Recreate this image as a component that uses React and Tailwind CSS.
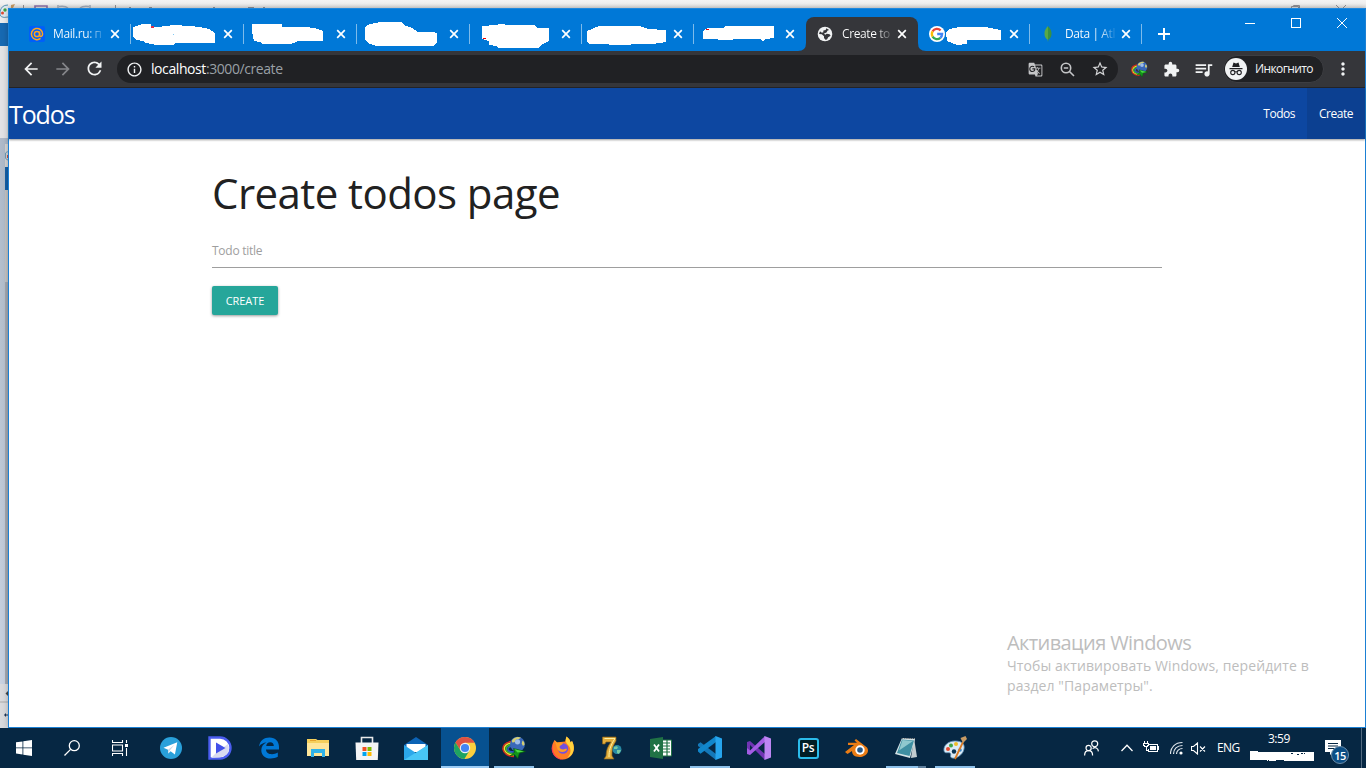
import React from "react";
import {
  MdArrowBack,
  MdArrowForward,
  MdRefresh,
  MdInfoOutline,
  MdGTranslate,
  MdStarBorder,
  MdExtension,
  MdQueueMusic,
  MdMoreVert,
} from "react-icons/md";

const UI = "font-['Open_Sans','Noto_Sans',sans-serif]";

function Cross({ className = "" }) {
  return (
    <svg className={className} width="10" height="10" viewBox="0 0 10 10">
      <path d="M1.2 1.2 8.8 8.8M8.8 1.2 1.2 8.8" stroke="#fff" strokeWidth="1.7" fill="none" />
    </svg>
  );
}

const tabs = [
  { x: 18, w: "w-[113px]", kind: "mail", title: "Mail.ru: п" },
  { x: 131, w: "w-[113px]", blob: "M133 27 137 26 142 24H151L152 27 157 27 166 26 173 25 190 26 200 27 209 29 215 33V43H175L174 45H154L153 44 145 43 143 41 137 40 133 37Z" },
  { x: 244, w: "w-[113px]", blob: "M252 24H282V27L305 27 315 28 323 31V41H297L296 42 290 44H262L260 42 254 41 252 32Z" },
  { x: 357, w: "w-[113px]", blob: "M365 27 370 24 380 22H401L404 25 412 28 418 32 433 32 437 33V43L433 46H377L370 44 365 40Z" },
  { x: 470, w: "w-[112px]", blob: "M482 26 495 25 500 24 510 25H534L537 28H549V41L543 44 538 48H498L496 46 489 45V41L482 39Z" },
  { x: 582, w: "w-[112px]", blob: "M587 31 592 29 599 26H640L648 29 666 30V42L652 44 610 45 608 44H590L587 42Z" },
  { x: 694, w: "w-[112px]", blob: "M703 31 708 28 723 28 726 26H774V38L765 39 763 41 760 39H734L732 40 703 39Z" },
  { x: 806, w: "w-[112px]", kind: "active", title: "Create to" },
  { x: 918, w: "w-[112px]", kind: "google", blob: "M946 32 949 29 959 27 985 27 990 28 1001 30V40H967V44L957 45 952 43 947 41Z" },
  { x: 1030, w: "w-[112px]", kind: "mongo", title: "Data | Atl" },
];

function TabIcon({ kind }) {
  if (kind === "mail")
    return (
      <svg className="-ml-px" width="16" height="16" viewBox="0 0 16 16">
        <rect width="16" height="16" rx="2" fill="#005ff9" />
        <g fill="none" stroke="#ffa61e" strokeWidth="1.5">
          <circle cx="8" cy="8" r="2.6" />
          <path d="M10.6 5.6V9c0 2.2 3 1.900 3-1A5.600 5.600 0 1 0 11.500 12.400" />
        </g>
      </svg>
    );
  if (kind === "active")
    return (
      <svg className="-ml-px" width="16" height="16" viewBox="0 0 16 16">
        <circle cx="8" cy="8" r="7.300" fill="#f1f3f4" />
        <path d="M9.300 2.200 8.700 4 6.400 4.600 6.200 6.400 4.400 6.600 3 5.300 2 8l2.800.2L7 10.200V12l1.400 1.800L10 13.500 11.200 11.300 13.600 9.800 12.600 8.200 9.800 7.800 8.200 8.800 7 7.600 9.500 6.600 10.600 4.600 12.200 3.900Z" fill="#35363a" />
      </svg>
    );
  if (kind === "google")
    return (
      <svg width="16" height="16" viewBox="0 0 16 16">
        <circle cx="8" cy="8" r="8" fill="#fff" />
        <g fill="none" strokeWidth="2.300">
          <path d="M11.600 4.400A5.100 5.100 0 0 0 3.600 5.400" stroke="#ea4335" />
          <path d="M3.600 5.400A5.100 5.100 0 0 0 3.600 10.600" stroke="#fbbc05" />
          <path d="M3.600 10.600A5.100 5.100 0 0 0 11.400 11.800" stroke="#34a853" />
          <path d="M11.400 11.800A5.100 5.100 0 0 0 13.100 8H8.200" stroke="#4285f4" />
        </g>
      </svg>
    );
  if (kind === "mongo")
    return (
      <svg className="-ml-[2px]" width="16" height="16" viewBox="0 0 16 16">
        <path d="M8 0C5 3 4.400 5.500 4.500 8c0 3 1.500 4.500 3 5.600L8 16Z" fill="#59a845" />
        <path d="M8 0c3 3 3.600 5.500 3.500 8 0 3-1.500 4.500-3 5.600L8 16Z" fill="#3a9140" />
      </svg>
    );
  return null;
}

function Tab({ tab, separator }) {
  const active = tab.kind === "active";
  return (
    <div
      className={`relative flex h-[34px] shrink-0 items-center ${tab.w} ${active ? "rounded-t-[8px] bg-[#35363a]" : ""} ${tab.kind === "google" ? "pl-[11px]" : "pl-3"}`}
    >
      <TabIcon kind={tab.kind} />
      {tab.title && (
        <span
          className={`${tab.kind === "mail" ? "ml-2" : "ml-[9px]"} h-[18px] w-[54px] text-[12px] leading-[18px] font-medium tracking-[-0.4px] whitespace-nowrap text-transparent bg-clip-text bg-gradient-to-r from-white from-62% to-white/5 to-95%`}
        >
          {tab.title}
        </span>
      )}
      {tab.blob && (
        <svg className="absolute top-[-9px] left-0" width="112" height="43" viewBox={`${tab.x} 8 112 43`}>
          <path d={tab.blob} fill="#fff" shapeRendering="crispEdges" />
          {tab.x === 131 && <path d="M151 26h3v2h-3z" fill="#d9304c" />}
          {tab.x === 131 && <path d="M173 34h1v1h-1z" fill="#7fc8f5" />}
          {tab.x === 470 && <path d="M483 38h3v1h-3z" fill="#e00" />}
          {tab.x === 694 && <path d="M706 29h3v1h-3z" fill="#e00" />}
        </svg>
      )}
      <Cross className="absolute top-3 right-[11px]" />
      {active && (
        <>
          <svg className="absolute bottom-0 -left-2" width="8" height="8"><path d="M8 0V8H0Q8 8 8 0" fill="#35363a" /></svg>
          <svg className="absolute -right-2 bottom-0" width="8" height="8"><path d="M0 0V8H8Q0 8 0 0" fill="#35363a" /></svg>
        </>
      )}
      {separator && <i className="absolute top-[7px] right-0 h-5 w-px bg-[#7dbbeb]" />}
    </div>
  );
}

function IdmIcon({ size = 24 }) {
  return (
    <svg width={size} height={size} viewBox="0 0 24 24">
      <g fill="none" strokeWidth="1.500">
        <path d="M9 5.500C3 6.500 .5 10 1 13.500S6 20.500 12 20.500" stroke="#d92b1c" />
        <path d="M9 7C4.500 8 2 10.500 2.500 13.500S7 19 12 19" stroke="#f3e02b" />
        <path d="M9 8.500C6 9.500 3.800 11.500 4.200 13.500S8 17.500 12 17.500" stroke="#35b936" />
        <path d="M10 10C7.500 10.700 5.500 12 5.900 13.500S9 16 12 16" stroke="#2d59c8" />
      </g>
      <circle cx="15.500" cy="8.300" r="7.500" fill="#3a68b8" />
      <path d="M9.800 4.700C11.800 1.300 16 .3 19 1.800L16.500 3.200l-2.500.5-1.500 2.500-2.200.3ZM20.500 4.500l1.600 1.500.5 2.500-1.600 1.500-1.300-2.500Z" fill="#d5cf72" />
      <circle cx="15.500" cy="5.800" r="2.600" fill="#9dbdea" />
      <path d="m11.500 12.500 12 3-6 1.700-1.800 5.300-3-3.800-4.700 1.300 4.500-3.800Z" fill="#12951a" stroke="#07570d" strokeWidth=".6" />
      <path d="m12.500 13.200 9.500 2.300-6.500 1Z" fill="#4ddb46" />
    </svg>
  );
}

function Toolbar() {
  return (
    <div className="flex h-[37px] shrink-0 items-center border-b border-[#242528] bg-[#35363a] pl-3 text-[#f1f3f4]">
      <MdArrowBack size={20} className="-mt-px" />
      <MdArrowForward size={20} className="-mt-px ml-3 text-[#85868a]" />
      <MdRefresh size={21} className="-mt-px ml-[11px]" />
      <div className="ml-3 flex h-7 w-[1001px] items-center rounded-full bg-[#202124] pl-[9px]">
        <MdInfoOutline size={17} />
        <span className="ml-2 grow text-[14px] leading-5 tracking-[-0.42px] text-white">
          localhost<span className="text-[#9aa0a6]">:3000/create</span>
        </span>
        <MdGTranslate size={15} className="mr-[17px] text-[#c4c5c7]" />
        <svg className="mr-[16px]" width="15" height="15" viewBox="0 0 15 15" fill="none" stroke="#c4c5c7" strokeWidth="1.600">
          <circle cx="6" cy="6" r="4.700" /><path d="m9.500 9.500 4.500 4.500M3.800 6h4.400" />
        </svg>
        <MdStarBorder size={18} className="mr-[9px] text-[#d4d5d7]" />
      </div>
      <div className="ml-[13px]"><IdmIcon size={17} /></div>
      <MdExtension size={17} className="ml-[15px]" />
      <MdQueueMusic size={21} className="ml-[13px]" />
      <div className="ml-[9px] flex h-7 w-[101px] items-center rounded-full border border-[#3d3e42] bg-[#202124] pl-px">
        <svg className="shrink-0" width="22" height="22" viewBox="0 0 22 22">
          <circle cx="11" cy="11" r="11" fill="#f1f3f4" />
          <path d="M7.200 9 8.500 4.600l2.500.8 2.500-.8L14.800 9ZM4.500 10h13v1.300h-13z" fill="#202124" />
          <g fill="none" stroke="#202124" strokeWidth="1.100"><circle cx="7.800" cy="14.500" r="2.100" /><circle cx="14.200" cy="14.500" r="2.100" /><path d="M10 14q1-.6 2 0" /></g>
        </svg>
        <span className="ml-2 text-[12px] leading-5 font-medium tracking-[-0.6px] whitespace-nowrap">Инкогнито</span>
      </div>
      <MdMoreVert size={20} className="ml-[9px]" />
    </div>
  );
}

function WindowControls() {
  return (
    <div className="ml-auto flex h-[30px] text-white">
      <svg width="138" height="30" viewBox="0 0 138 30" fill="none" stroke="#fff" shapeRendering="crispEdges">
        <path d="M18 14.500h10" />
        <rect x="64.500" y="9.500" width="9" height="9" />
        <path d="m110 9 10 10m0-10-10 10" shapeRendering="auto" />
      </svg>
    </div>
  );
}

function Page() {
  return (
    <div className="flex grow flex-col bg-white">
      <nav className="relative flex h-[51px] shrink-0 items-center justify-between bg-[#0d47a1] text-white shadow-[0_1px_2px_rgba(0,0,0,0.4)]">
        <a className="mt-px text-[25px] leading-none tracking-[-1.1px]">Todos</a>
        <ul className="flex h-full text-[12px] font-medium tracking-[-0.48px]">
          <li className="flex items-center px-3">Todos</li>
          <li className="flex w-[58px] items-center justify-center bg-[#0c4091]">Create</li>
        </ul>
      </nav>
      <main className="ml-[203px] w-[950px]">
        <h1 className="mt-[29px] text-[42px] leading-[50px] tracking-[-0.56px] whitespace-nowrap text-[#212121]">Create todos page</h1>
        <div className="mt-[15px] h-[35px] border-b border-[#9e9e9e] pt-[9px] text-[12px] leading-[18px] tracking-[-0.25px] text-[#9e9e9e]">Todo title</div>
        <button className="mt-[18px] flex h-[29px] w-[66px] items-center justify-center rounded-[2px] bg-[#26a69a] pt-0.5 text-[11px] font-medium tracking-[-0.05px] text-white shadow-[0_1px_3px_rgba(0,0,0,0.4)]">CREATE</button>
      </main>
    </div>
  );
}

const icons = {
  telegram: (
    <svg width="24" height="24" viewBox="0 0 24 24">
      <circle cx="12" cy="12" r="11" fill="#29a0da" />
      <path d="m4.500 11.700 13.800-5.500-2.400 12.200-4.300-3.200-2.300 2.400-.3-3.800Z" fill="#fff" /><path d="m9 13.800 6.500-5-4.700 5.600-1.500 3.200Z" fill="#c8daea" />
    </svg>
  ),
  dee: (
    <svg width="24" height="24" viewBox="0 0 24 24">
      <path d="M1.500 1.500H12a10.500 10.500 0 0 1 0 21H1.500Z" fill="#fff" stroke="#4b5df0" strokeWidth="2.400" />
      <path d="m3 22 6-6 11-8c3 8-2 13-9 13.500Z" fill="#d8daf0" />
      <path d="M8 6.500 17.500 12 8 17.500Z" fill="#4250e8" />
    </svg>
  ),
  edge: (
    <svg width="22" height="22" viewBox="0 0 22 22">
      <path d="M1 9.500C2 3.500 6 .5 11.500.5c6 0 9.500 4 9.500 9.500v2.500H8c0 3 2.500 4.700 6 4.700 2 0 4-.6 5.800-1.700v4.300c-2 1.100-4.500 1.700-7 1.700C7 21.500 3.300 18 3.300 13.200c0-3.500 1.900-6.200 5.200-7.700C5.500 5.700 2.800 7 1 9.500M8.200 9h7.600c0-2.200-1.200-3.800-3.600-3.800S8.500 6.800 8.200 9" fill="#0078d7" />
    </svg>
  ),
  explorer: (
    <svg width="22" height="20" viewBox="0 0 22 20">
      <path d="M0 1h9l1.500 1H22v16H0Z" fill="#f6d05c" /><path d="M0 5h22v13H0z" fill="#ffe69a" />
      <path d="M4 11h14v8h-3v-4H7v4H4Z" fill="#30b2e8" /><path d="M3 2.500h6" stroke="#e8a32c" />
    </svg>
  ),
  store: (
    <svg width="24" height="24" viewBox="0 0 24 24">
      <path d="M6.500 7V1.500h11V7" fill="none" stroke="#e8e9ea" strokeWidth="1.600" /><path d="M.5 6.500h23L22.800 24H1.200Z" fill="#f3f4f5" />
      <path d="M7.500 11H11.500V15H7.500z" fill="#f25022" /><path d="M12.500 11h4v4h-4z" fill="#7fba00" /><path d="M7.500 16h4v4h-4z" fill="#00a4ef" /><path d="M12.500 16h4v4h-4z" fill="#ffb900" />
    </svg>
  ),
  mail: (
    <svg width="24" height="23" viewBox="0 0 24 23">
      <path d="m0 8 12-8 12 8v7H0Z" fill="#0c63b5" /><path d="M2.500 7h19v8h-19z" fill="#fff" /><path d="m0 8 12 8 12-8v15H0Z" fill="#2ba7ea" /><path d="m0 23 24-15v15Z" fill="#48c6f6" />
    </svg>
  ),
  chrome: (
    <svg width="24" height="24" viewBox="0 0 24 24">
      <circle cx="12" cy="12" r="11" fill="#fbcf3e" />
      <path d="M12 12V6.800h9.700A11 11 0 0 0 2.470 6.500L7.500 14.600Z" fill="#dd5144" />
      <path d="M2.470 6.500A11 11 0 0 0 11.400 23L16.500 14.600H12L7.500 14.600Z" fill="#1ea362" />
      <circle cx="12" cy="12" r="5.200" fill="#f1f1f1" /><circle cx="12" cy="12" r="4.100" fill="#4285f4" />
    </svg>
  ),
  idm: <IdmIcon />,
  firefox: (
    <svg width="24" height="24" viewBox="0 0 24 24">
      <path d="M3.500 4 6 6.500 9.500 6 14 5.500 15.500.5C18 2.500 19 4 19.500 6.500L21 5c5 9-.5 18.500-9 18.500S-1.500 15 2 7Z" fill="#ff7b25" />
      <path d="M15.500.5C18 2.500 19 4 19.500 6.500L21 5c4 8 1 15-5 17 5-5 4-10 1-13-2-2-3-4-1.500-8.500" fill="#ffd33d" />
      <path d="M2 7c-2 9 3 16 11 16.500C5 25-2.500 16 2 7" fill="#ff3657" />
      <circle cx="12" cy="12.500" r="5.200" fill="#7450df" /><path d="M3.500 4 6 6.500l4 0c3 0 2 2-.5 3-2 1-.5 4 2.500 4 2 0 3-1 4-.5-1 4-9 4-10-1Z" fill="#ff9d24" />
    </svg>
  ),
  seven: (
    <svg width="22" height="24" viewBox="0 0 22 24">
      <path d="M1.500 1H15v4c-4 6-4 10-4 15l2 3H3l2-3c0-6 2-10 5-14H5L4 8H1.500Z" fill="#e1ae3d" stroke="#8d6117" strokeWidth=".7" /><path d="m3.500 2.500 10.500 0C9 10 8 15 8 21" fill="none" stroke="#fff0a0" />
      <circle cx="16" cy="13.500" r="4.500" fill="#278aa4" /><path d="M13 11c3-2 5 0 3 2l-3 0M16 14l4 0-2 4-2-1" fill="#75c9a4" />
    </svg>
  ),
  excel: (
    <svg width="22" height="22" viewBox="0 0 22 22">
      <path d="M12 3h9.500v16H12z" fill="#fff" stroke="#207245" /><path d="M13 6h7M13 9h7M13 12h7M13 15h7M17 3v16" stroke="#207245" strokeWidth="1.200" />
      <path d="m0 2 13-2v22L0 20Z" fill="#207245" /><path d="m4 7.500 5 7m0-7-5 7" stroke="#fff" strokeWidth="1.800" />
    </svg>
  ),
  vscode: (
    <svg width="24" height="24" viewBox="0 0 24 24">
      <path d="m0 8 2.500-1.700L18 18v6L0 10Z" fill="#1478b9" /><path d="m0 15.500 2.500 2.200L18 6V0L0 13Z" fill="#1186cb" /><path d="m17.500 0 6.500 2.500v19L17.500 24Z" fill="#26a5ee" />
    </svg>
  ),
  vs: (
    <svg width="24" height="24" viewBox="0 0 24 24">
      <path d="m0 6 3-1 15 13v6L3 9v6.500l-3 2Z" fill="#7034b4" /><path d="m0 18 3 1L18 6V0L3 14.500 0 12Z" fill="#a35de4" /><path d="m17.500 0 6.500 2.500v19L17.500 24Z" fill="#bd85f3" />
    </svg>
  ),
  ps: (
    <div className="flex h-[21px] w-[21px] items-center justify-center rounded-[3px] border-2 border-[#2bbceb] bg-[#001d26] text-[12px] leading-none font-semibold tracking-[-0.4px] text-white">Ps</div>
  ),
  blender: (
    <svg width="24" height="20" viewBox="0 0 24 20">
      <path d="M11 1 22 9.500c3 4-1 9.500-7.500 9.500C9 19 7 16 7 13L2.500 16 0 14l9-7H3V4.800h9L9.500 2.500Z" fill="#ea7c15" />
      <circle cx="15" cy="12" r="4.700" fill="#fff" /><circle cx="15" cy="12" r="2.800" fill="#265787" />
    </svg>
  ),
  notepad: (
    <svg width="24" height="24" viewBox="0 0 24 24">
      <path d="m20 2 3 19-6 1Z" fill="#c3ccd0" /><path d="m8 2 13 1-5 19-15-4Z" fill="#d5e3e6" /><path d="m8 3.500 12 1-4.500 15.500-12.500-3Z" fill="#3f8fa2" /><path d="m8.500 4 10.500 1L5 14.500Z" fill="#8fc8ce" /><path d="M8 2.500h13" stroke="#888" strokeDasharray="1 1" />
    </svg>
  ),
  paint: <PaintIcon />,
};

function PaintIcon() {
  return (
    <svg width="24" height="24" viewBox="0 0 24 24">
      <path d="M1 15C0 9 6 5 12 5c7 0 10 3 9 8-1 6-8 10-12 9-3-1 0-4-2-5s-5 1-6-2" fill="#dbeaf5" stroke="#5c91b9" strokeWidth=".8" />
      <circle cx="5" cy="13" r="2" fill="#e24b32" /><circle cx="8" cy="9.500" r="2" fill="#41a447" /><circle cx="13" cy="8" r="2" fill="#f0bd28" /><circle cx="11" cy="15.500" r="2.200" fill="#073151" />
      <circle cx="17" cy="14" r="1.800" fill="#318ad2" /><path d="m12 23 8-17" stroke="#d97a24" strokeWidth="1.800" /><path d="m17.500 2 5-2 1.500 3-4 4Z" fill="#c79b65" />
    </svg>
  );
}

const apps = ["telegram", "dee", "edge", "explorer", "store", "mail", "chrome", "idm", "firefox", "seven", "excel", "vscode", "vs", "ps", "blender", "notepad", "paint"];
const running = ["idm", "vscode", "notepad", "paint"];

function Taskbar() {
  return (
    <footer className="absolute bottom-0 left-0 flex h-10 w-full bg-[#062743] text-white">
      <div className="flex w-[147px] shrink-0">
        <div className="grid w-12 place-items-center">
          <svg width="16" height="16" viewBox="0 0 16 16" fill="#fff"><path d="m0 2.300 6.500-.9v6.100H0zM7.300 1.300 16 0v7.500H7.300zM0 8.300h6.500v6.100L0 13.500zM7.300 8.300H16V16l-8.700-1.300z" /></svg>
        </div>
        <div className="grid w-12 place-items-center">
          <svg width="16" height="16" viewBox="0 0 16 16" fill="none" stroke="#fff" strokeWidth="1.300"><circle cx="10.300" cy="5.700" r="5" /><path d="M6.600 9.400.5 15.500" /></svg>
        </div>
        <div className="grid w-12 place-items-center">
          <svg width="16" height="16" viewBox="0 0 16 16" fill="none" stroke="#fff" strokeWidth="1.100"><path d="M.5 0v2.500h10V0M.5 16v-2.500h10V16M.5 5h10v6H.5zM14.500 0v3M14.500 8v8" /><path d="M13.500 4.500h2v2h-2z" fill="#fff" /></svg>
        </div>
      </div>
      <div className="flex gap-px">
        {apps.map((name) => (
          <div key={name} className={`relative flex w-12 items-center justify-center ${name === "chrome" ? "bg-[#075190]" : ""}`}>
            {icons[name]}
            {name === "chrome" && <i className="absolute bottom-0 left-0 h-0.5 w-full bg-[#9acbf5]" />}
            {running.includes(name) && <i className="absolute bottom-0 left-1 h-0.5 w-10 bg-[#8dc0e9]" />}
            {name === "notepad" && <i className="absolute right-1 bottom-0 h-0.5 w-2 bg-[#5e7f9d]" />}
          </div>
        ))}
      </div>
      <div className="ml-auto flex w-[285px] shrink-0 items-center">
        <svg className="ml-[3px]" width="15" height="16" viewBox="0 0 15 16" fill="none" stroke="#fff" strokeWidth="1.200">
          <circle cx="10.700" cy="3.800" r="3" /><circle cx="4.600" cy="8" r="2.600" /><path d="M.6 15.500c0-6.500 8-6.500 8 0M8.600 8.600c2.500-2 5.600-.5 5.800 2.800" />
        </svg>
        <svg className="ml-[22px]" width="12" height="8" viewBox="0 0 12 8" fill="none" stroke="#fff" strokeWidth="1.300"><path d="m.5 7 5.500-5.700L11.500 7" /></svg>
        <svg className="ml-[10px]" width="17" height="14" viewBox="0 0 17 14" fill="none" stroke="#fff" shapeRendering="crispEdges"><path d="M6 3.500h8.500v7h-9V8M15.500 5v4M1.500 0v2M4.500 0v2M.5 2.500h5v2h-1v1h-3v-1h-1zM3.500 6v3.500h2" /><path d="M7 5h6v4H7z" fill="#fff" stroke="none" /></svg>
        <svg className="ml-[10px]" width="13" height="14" viewBox="0 0 13 14" fill="none" stroke="#e0e7ed"><path d="M.5 13C.5 6.500 5 1.500 12.500 1.500M3.500 13c0-5 3.500-8.500 9-8.500M6.500 13c0-3 2.500-5.500 6-5.500" strokeWidth="1.200" /><circle cx="11" cy="12" r="1.600" fill="#fff" stroke="none" /></svg>
        <svg className="ml-[8px]" width="15" height="13" viewBox="0 0 15 13" fill="none" stroke="#fff" strokeWidth="1.100"><path d="M.5 4.500h2L6.500 1v11l-4-3.500h-2ZM9 4.500l5 5m0-5-5 5" /></svg>
        <span className="ml-[11px] w-6 text-[12px] tracking-[-0.6px]">ENG</span>
        <div className="ml-[9px] flex w-[64px] flex-col">
          <span className="-mt-1 ml-[18px] text-[12px] leading-[17px] tracking-[-0.5px]">3:59</span>
          <svg className="mt-[4px]" width="64" height="11" viewBox="0 0 64 11" shapeRendering="crispEdges"><path d="M0 0h8v1h56v9H34v-1h-8v1h-9v-1H3V9H0z" fill="#fff" /><path d="M41 2h3M47 3h2M51 2h4M4 9h3M10 9h2M15 9h4" stroke="#062743" strokeDasharray="2 1" /></svg>
        </div>
        <div className="relative ml-[11px] h-4 w-4">
          <svg width="16" height="16" viewBox="0 0 16 16"><path d="M0 0h16v12H8l-3 3v-3H0z" fill="#fff" /><path d="M3 3.500h10M3 6h10M3 8.500h7" stroke="#062743" /></svg>
          <span className="absolute top-[6px] left-[6px] flex h-[18px] w-[18px] items-center justify-center rounded-full border border-[#6b8ca8] bg-[#0c4e85] text-[11px] leading-none font-semibold tracking-[-0.6px]">15</span>
        </div>
      </div>
      <i className="absolute top-0 right-[4px] h-full w-px bg-[#526a80]" />
    </footer>
  );
}

function BackgroundWindows() {
  return (
    <div className="absolute inset-0">
      <svg width="1366" height="728" viewBox="0 0 1366 728">
        <defs>
          <linearGradient id="desk" x2="0" y2="1"><stop stopColor="#aebaca" /><stop offset=".3" stopColor="#b6c1ce" /><stop offset="1" stopColor="#cbd4e3" /></linearGradient>
          <linearGradient id="shade" x2="0" y2="1"><stop stopColor="#f3f3f3" /><stop offset=".5" stopColor="#f0f0f0" /><stop offset="1" stopColor="#dcdcdc" /></linearGradient>
        </defs>
        <path d="M0 0h1366v8H0z" fill="url(#shade)" />
        <path d="M0 8h8v15H0z" fill="#ececec" /><path d="M0 23h8v23H0z" fill="#1769b2" /><path d="M0 46h8v92H0z" fill="#e2e3e5" />
        <path d="M0 138h8v590H0z" fill="url(#desk)" />
        <path d="M5 144h3v23H5z" fill="#d6d6d6" /><path d="M5 167h3v23H5z" fill="#125fa8" /><path d="M5 190h3v92H5z" fill="#c4c4c4" /><path d="M5 282h3v402H5z" fill="#a4a9b1" />
        <path d="M5.500 153q2-2 2.500-1M5.500 153v5q1 2 2.500 2" fill="none" stroke="#6f9cb8" /><path d="M7 155h1v3H7z" fill="#c9564a" />
        <path d="M0 684h8v44H0z" fill="#d9dadd" /><path d="M0 702h8" stroke="#aaa" /><path d="M8 691v5l-2.500-2.500z" fill="#444" /><path d="M4 715h4M5.500 713.500v3" stroke="#1b3456" />
        <g fill="none" stroke="#8f8f94" strokeWidth="1"><path d="M23.500 5v3M115.500 5v3M1291.500 8V6.500h7V8M1293.500 6.500v-1h6V8M1336 5l3 3M1346 5l-3 3" /><path d="M35 8V6h12v2" stroke="#8a6fa8" strokeWidth="1.600" /><path d="M58 5v3M59 6.500q6-1 9 1.500M90 5v3M89 6.500q-6-1-9 1.500" stroke="#a3acba" strokeWidth="1.500" /><path d="M129 7.500h2m18 0h3m61 0h2M248 7.500h6m9 0h2" /></g>
        <g><path d="M8 5q-7 0-8 7t8 5" fill="#dfeaf1" stroke="#5b95b5" /><circle cx="5" cy="10" r="1.700" fill="#41a447" /><circle cx="2.500" cy="13" r="1.500" fill="#e24b32" /><path d="m11 5 4-1-2 4h-2Z" fill="#c79b65" /></g>
      </svg>
    </div>
  );
}

export default function App() {
  return (
    <div className={`relative h-[768px] w-[1366px] overflow-hidden bg-[#c2ccda] ${UI}`}>
      <BackgroundWindows />
      <div className="absolute top-2 left-2 flex h-[720px] w-[1358px] flex-col border-r border-b border-l border-[#1b80d4] shadow-[0_0_6px_rgba(0,0,0,0.25)]">
        <header className="flex h-[43px] shrink-0 border-t border-[#1f87dc] bg-[#0078d7]">
          <div className="mt-2 flex pl-[9px]">
            {tabs.map((tab, i) => (
              <Tab key={tab.x} tab={tab} separator={i !== 6 && i !== 7} />
            ))}
            <svg className="mt-[11px] ml-[16px]" width="12" height="12" viewBox="0 0 12 12"><path d="M6 0v12M0 6h12" stroke="#fff" strokeWidth="2" /></svg>
          </div>
          <WindowControls />
        </header>
        <Toolbar />
        <Page />
      </div>
      <aside className="absolute top-[631px] left-[1007px] whitespace-nowrap text-[#bdbdbd]">
        <p className="text-[20px] leading-[24px] tracking-[-0.6px]">Активация Windows</p>
        <p className="mt-px text-[14px] leading-5 tracking-[0.1px]">Чтобы активировать Windows, перейдите в<br />раздел "Параметры".</p>
      </aside>
      <Taskbar />
    </div>
  );
}
